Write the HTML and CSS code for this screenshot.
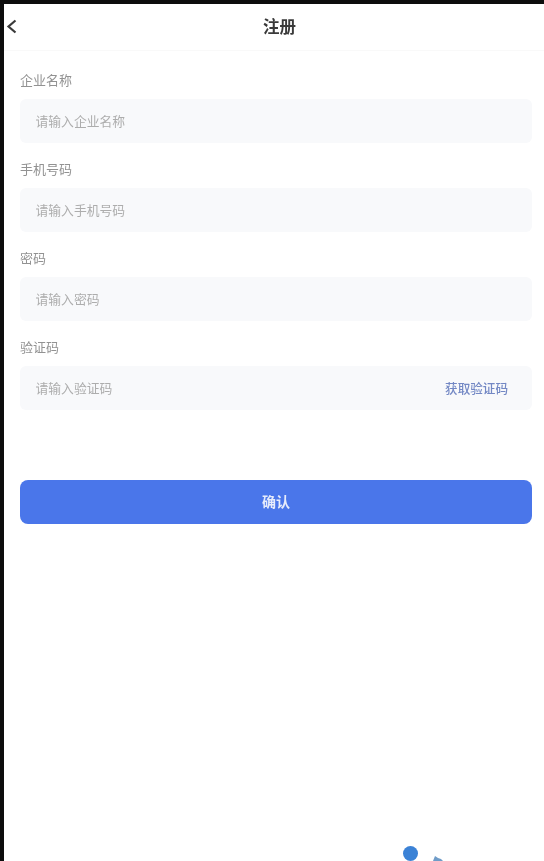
FILE: index.html
```html
<!DOCTYPE html>
<html lang="zh-CN">
<head>
    <meta charset="UTF-8">
    <meta name="viewport" content="width=device-width, initial-scale=1.0">
    <title>注册</title>
    <link rel="stylesheet" href="styles.css">
</head>
<body>
    <div class="page">
        <header class="nav">
            <svg class="back" width="11" height="15" viewBox="0 0 11 15">
                <path d="M9.5 1.5 L2.5 7.5 L9.5 13.5" fill="none" stroke="#3a3a3a" stroke-width="2.2"/>
            </svg>
            <h1>注册</h1>
        </header>
        <form class="form">
            <div class="field">
                <label>企业名称</label>
                <div class="input"><span class="hint">请输入企业名称</span></div>
            </div>
            <div class="field">
                <label>手机号码</label>
                <div class="input"><span class="hint">请输入手机号码</span></div>
            </div>
            <div class="field">
                <label>密码</label>
                <div class="input"><span class="hint">请输入密码</span></div>
            </div>
            <div class="field">
                <label>验证码</label>
                <div class="input"><span class="hint">请输入验证码</span><span class="get-code">获取验证码</span></div>
            </div>
            <div class="submit"><span>确认</span></div>
        </form>
        <div class="float-btn">
            <span class="dot"></span>
            <svg class="mark" width="12" height="6" viewBox="0 0 12 6">
                <path d="M1 6 L3 1 L6 3 L9 4 L11 6 Z" fill="#6f9cc8"/>
            </svg>
        </div>
    </div>
</body>
</html>
```

FILE: styles.css
```css
html, body {
    margin: 0;
    padding: 0;
    height: 100%;
    background-color: #0d0d0d;
    overflow: hidden;
}
body {
    font-family: "Noto Sans CJK SC", "Noto Sans", sans-serif;
    padding: 4px 0 0 4px;
    box-sizing: border-box;
}
.page {
    position: relative;
    height: 857px;
    background-color: #fff;
    overflow: hidden;
}
.nav {
    position: relative;
    height: 47px;
    display: flex;
    align-items: center;
    justify-content: center;
    border-bottom: 1px solid #f9f9f9;
    box-sizing: border-box;
}
.nav h1 {
    margin: -3px 0 0 11px;
    font-size: 16.5px;
    font-weight: 700;
    color: #3a3a3a;
    filter: blur(0.5px);
}
.back {
    position: absolute;
    left: 2px;
    top: 15px;
    filter: blur(0.3px);
}
.form {
    padding: 20px 12px 0 16px;
}
.field {
    margin-bottom: 17px;
}
.field label {
    display: block;
    height: 18px;
    line-height: 18px;
    margin-bottom: 10px;
    font-size: 13px;
    color: #929292;
    filter: blur(0.5px);
}
.input {
    height: 44px;
    display: flex;
    align-items: center;
    justify-content: space-between;
    padding: 0 24px 0 15.5px;
    background-color: #f8f9fb;
    border-radius: 6px;
    font-size: 12.8px;
    color: #adadad;
}
.hint {
    margin-top: -2px;
    filter: blur(0.5px);
}
.get-code {
    margin-top: -2px;
    color: #7388c4;
    font-size: 12.6px;
    font-weight: 500;
    filter: blur(0.5px);
}
.submit {
    height: 44px;
    line-height: 42px;
    margin-top: 70px;
    text-align: center;
    background-color: #4a76ea;
    border-radius: 8px;
    color: #e6ebfb;
    font-size: 14px;
    font-weight: 700;
}
.submit span {
    display: inline-block;
    filter: blur(0.5px);
}
.float-btn {
    position: absolute;
    left: 399px;
    top: 842px;
    display: flex;
    align-items: flex-end;
    gap: 14px;
}
.dot {
    width: 15px;
    height: 15px;
    border-radius: 50%;
    background-color: #3b82d6;
}
.mark {
    filter: blur(0.6px);
}
```
